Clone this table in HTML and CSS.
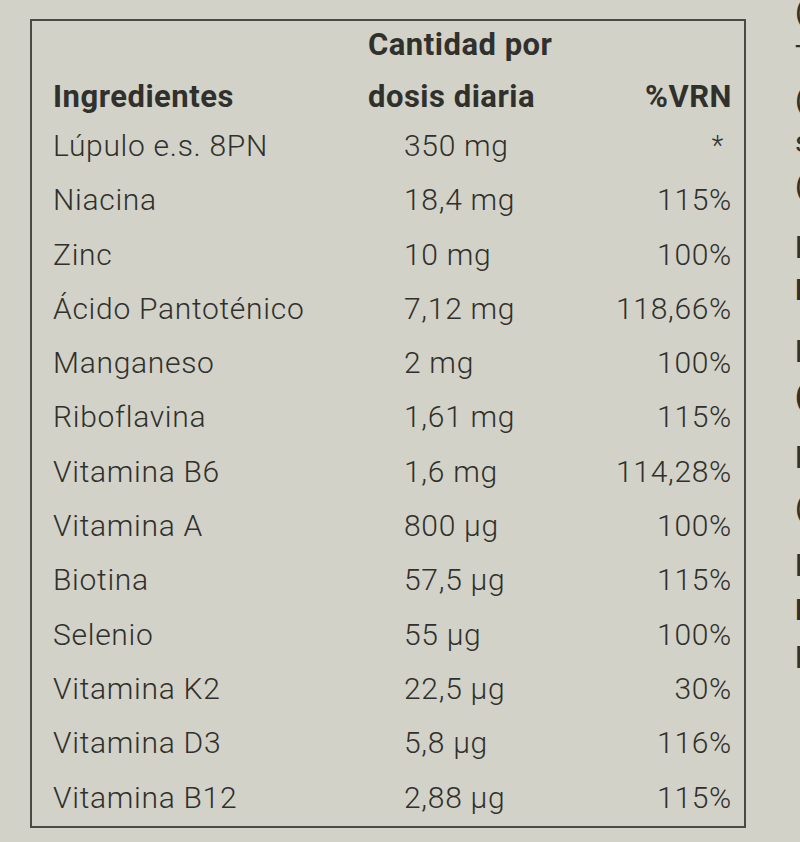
FILE: index.html
```html
<!DOCTYPE html>
<html lang="es">
<head>
<meta charset="utf-8">
<title>Ingredientes</title>
<link rel="stylesheet" href="styles.css">
</head>
<body>
<div class="page">
  <div class="box">
    <div class="head">
      <div class="h1 hb">Ingredientes</div>
      <div class="h2 hb">Cantidad por<br>dosis diaria</div>
      <div class="h3 hb">%VRN</div>
    </div>
    <div class="rows">
      <div class="c1">Lúpulo e.s. 8PN</div><div class="c2">350 mg</div><div class="c3 ast">*</div>
      <div class="c1">Niacina</div><div class="c2">18,4 mg</div><div class="c3">115%</div>
      <div class="c1">Zinc</div><div class="c2">10 mg</div><div class="c3">100%</div>
      <div class="c1">Ácido Pantoténico</div><div class="c2">7,12 mg</div><div class="c3">118,66%</div>
      <div class="c1">Manganeso</div><div class="c2">2 mg</div><div class="c3">100%</div>
      <div class="c1">Riboflavina</div><div class="c2">1,61 mg</div><div class="c3">115%</div>
      <div class="c1">Vitamina B6</div><div class="c2">1,6 mg</div><div class="c3">114,28%</div>
      <div class="c1">Vitamina A</div><div class="c2">800 µg</div><div class="c3">100%</div>
      <div class="c1">Biotina</div><div class="c2">57,5 µg</div><div class="c3">115%</div>
      <div class="c1">Selenio</div><div class="c2">55 µg</div><div class="c3">100%</div>
      <div class="c1">Vitamina K2</div><div class="c2">22,5 µg</div><div class="c3">30%</div>
      <div class="c1">Vitamina D3</div><div class="c2">5,8 µg</div><div class="c3">116%</div>
      <div class="c1">Vitamina B12</div><div class="c2">2,88 µg</div><div class="c3">115%</div>
    </div>
  </div>
  <div class="side">
    <span class="f" style="top:-6px">(</span>
    <span class="f" style="top:38px">T</span>
    <span class="f" style="top:82px">(</span>
    <span class="f" style="top:124px">s</span>
    <span class="f" style="top:168px">(</span>
    <span class="f" style="top:230px">l</span>
    <span class="f b" style="top:272px">I</span>
    <span class="f" style="top:334px">l</span>
    <span class="f b" style="top:378px">(</span>
    <span class="f" style="top:440px">l</span>
    <span class="f" style="top:490px">(</span>
    <span class="f" style="top:548px">l</span>
    <span class="f b" style="top:592px">I</span>
    <span class="f" style="top:640px">l</span>
  </div>
</div>
</body>
</html>
```
FILE: styles.css
```css
html, body {
  margin: 0;
  padding: 0;
  width: 800px;
  height: 842px;
  overflow: hidden;
  background: #d2d2c8;
}
.page {
  position: relative;
  width: 800px;
  height: 842px;
  padding: 19px 0 0 30px;
  box-sizing: border-box;
  font-family: Roboto, "Liberation Sans", sans-serif;
  color: #30302c;
}
.box {
  width: 716px;
  height: 809px;
  box-sizing: border-box;
  border: 2px solid #4a4a44;
  padding: 0 12px 0 21px;
}
.head {
  display: grid;
  grid-template-columns: 315px 1fr auto;
  align-items: end;
  margin-top: -2px;
  margin-bottom: -4px;
}
.hb {
  font-weight: 700;
  font-size: 31px;
  line-height: 52px;
  letter-spacing: 0.5px;
}
.h3 { text-align: right; }
.rows {
  display: grid;
  grid-template-columns: 315px 1fr auto;
  grid-auto-rows: 54.3px;
  align-items: center;
  font-weight: 300;
  font-size: 30px;
  line-height: 54.3px;
  letter-spacing: 0.7px;
}
.c2 { padding-left: 36px; }
.c3 { text-align: right; }
.ast { font-size: 27px; padding-right: 8px; }
.side {
  position: absolute;
  left: 795px;
  top: 0;
  width: 40px;
  height: 842px;
  font-size: 30px;
  font-weight: 400;
  color: #30302c;
}
.f { position: absolute; left: 0; line-height: 36px; }
.f.b { font-weight: 900; }
```
